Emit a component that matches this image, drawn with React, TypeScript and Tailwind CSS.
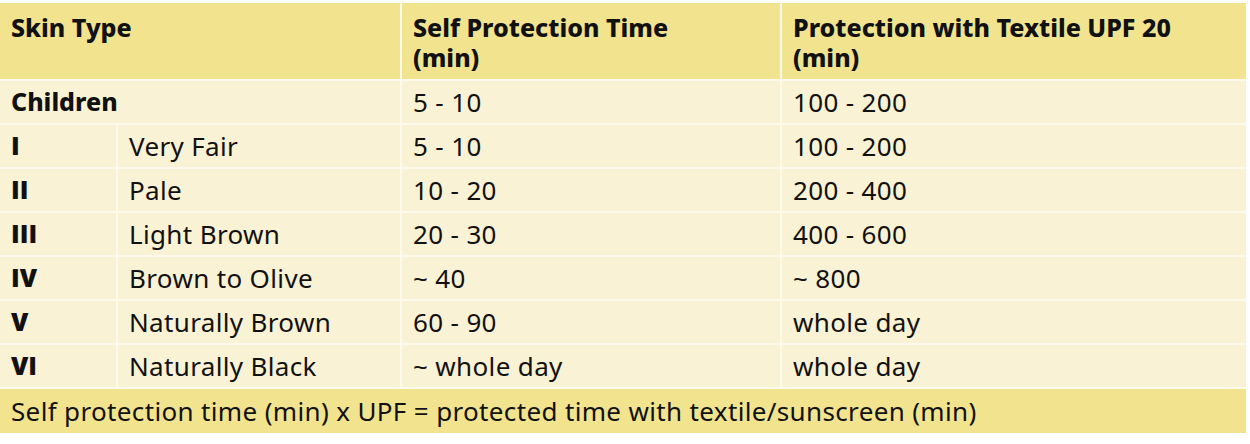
const rows: [string, string, string, string][] = [
  ["I", "Very Fair", "5 - 10", "100 - 200"],
  ["II", "Pale", "10 - 20", "200 - 400"],
  ["III", "Light Brown", "20 - 30", "400 - 600"],
  ["IV", "Brown to Olive", "~ 40", "~ 800"],
  ["V", "Naturally Brown", "60 - 90", "whole day"],
  ["VI", "Naturally Black", "~ whole day", "whole day"],
];

export default function App() {
  return (
    <div
      className="h-[444px] w-[1250px] bg-white pt-[3px] pr-[4px] text-[#111]"
      style={{ fontFamily: '"Noto Sans", "Open Sans", sans-serif' }}
    >
      <div className="grid grid-cols-[116px_282px_378px_464px] gap-[2px] bg-[#fdf9ec]">
        {/* Header */}
        <div className="col-span-2 h-[76px] bg-[#f2e48f] px-[11px] pt-[9px] text-[25px] font-extrabold leading-[30px]">
          Skin Type
        </div>
        <div className="h-[76px] bg-[#f2e48f] px-[11px] pt-[9px] text-[25px] font-extrabold leading-[30px]">
          Self Protection Time
          <br />
          (min)
        </div>
        <div className="h-[76px] bg-[#f2e48f] px-[11px] pt-[9px] text-[25px] font-extrabold leading-[30px]">
          Protection with Textile UPF 20
          <br />
          (min)
        </div>

        {/* Children */}
        <div className="col-span-2 flex h-[42px] items-center bg-[#faf2d4] px-[11px] text-[25px] font-extrabold">
          Children
        </div>
        <Cell>5 - 10</Cell>
        <Cell>100 - 200</Cell>

        {rows.map(([n, name, self, upf]) => (
          <Row key={n} n={n} name={name} self={self} upf={upf} />
        ))}

        {/* Footer */}
        <div className="col-span-4 flex h-[44px] items-center bg-[#f2e48f] px-[11px] text-[26px] tracking-[0.35px]">
          Self protection time (min) x UPF = protected time with textile/sunscreen (min)
        </div>
      </div>
    </div>
  );
}

function Row({ n, name, self, upf }: { n: string; name: string; self: string; upf: string }) {
  return (
    <>
      <div
        className="flex h-[42px] items-center bg-[#faf2d4] px-[11px] text-[25px] font-extrabold"
        style={{ fontFamily: '"Open Sans", sans-serif' }}
      >
        {n}
      </div>
      <Cell>{name}</Cell>
      <Cell>{self}</Cell>
      <Cell>{upf}</Cell>
    </>
  );
}

function Cell({ children }: { children: React.ReactNode }) {
  return (
    <div className="flex h-[42px] items-center bg-[#faf2d4] px-[11px] text-[26px] tracking-[0.35px]">
      {children}
    </div>
  );
}
